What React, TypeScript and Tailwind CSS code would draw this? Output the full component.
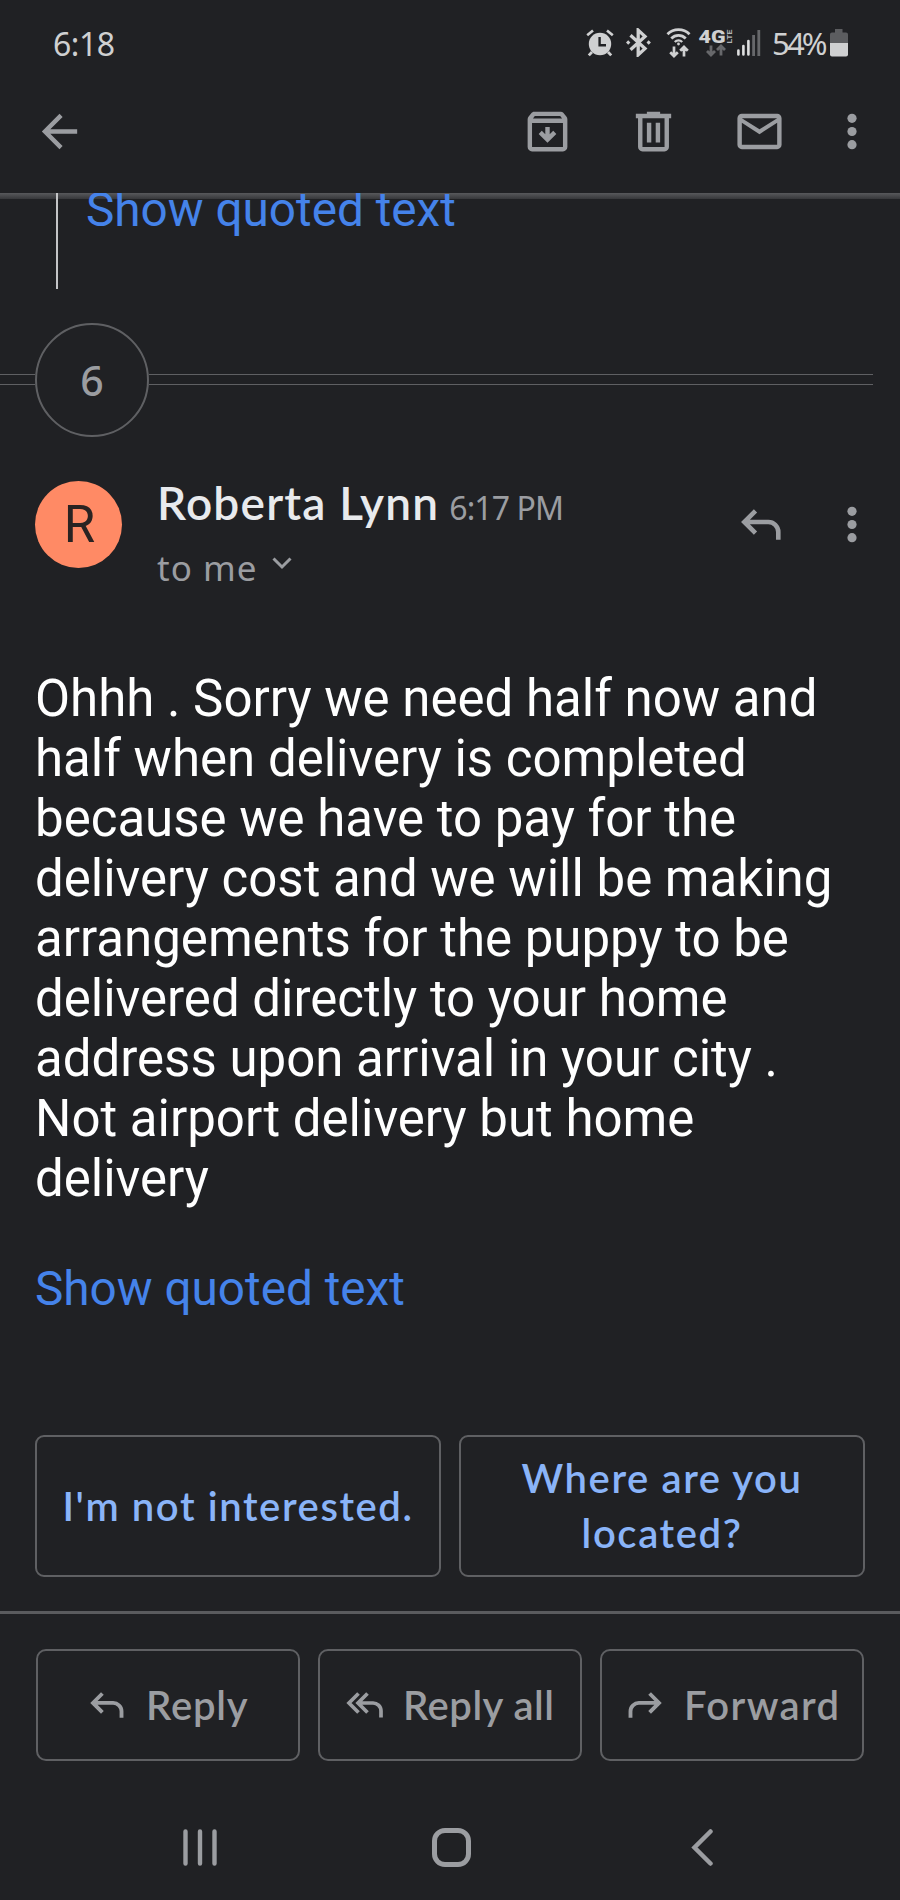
import type { ReactNode } from "react";

const message =
  "Ohhh . Sorry we need half now and half when delivery is completed because we have to pay for the delivery cost and we will be making arrangements for the puppy to be delivered directly to your home address upon arrival in your city . Not airport delivery but home delivery";

function AlarmIcon() {
  return (
    <svg width="28" height="28" viewBox="0 0 28 28" className="text-[#cfd0d1]">
      <circle cx="14" cy="15" r="11.2" fill="currentColor" />
      <path d="M1.2 6.2L7 1.4M26.8 6.2L21 1.4" stroke="currentColor" strokeWidth="2.6" />
      <path d="M6 23L2.8 26.4M22 23l3.2 3.4" stroke="currentColor" strokeWidth="2.8" />
      <path d="M13.6 8v8.2H20" fill="none" stroke="#202124" strokeWidth="2.4" />
    </svg>
  );
}

function BluetoothIcon() {
  return (
    <svg width="25" height="29" viewBox="0 0 25 29" className="text-[#cfd0d1]">
      <path d="M4.5 7.2L19 20.6l-6.8 6.2V2.2L19 8.4 4.5 21.8" fill="none" stroke="currentColor" strokeWidth="3.3" />
      <path d="M0 14.5l2.2-2.2 2.2 2.2-2.200 2.200zM20.500 14.500l2.200-2.200 2.200 2.200-2.200 2.200z" fill="currentColor" />
    </svg>
  );
}

function WifiIcon() {
  return (
    <svg width="25" height="31" viewBox="0 0 25 31" fill="none" stroke="currentColor" className="text-[#cfd0d1]">
      <path d="M1.5 7.2a15.4 15.4 0 0 1 22 0" strokeWidth="2.8" />
      <path d="M5.3 11.4a10.2 10.2 0 0 1 14.4 0" strokeWidth="2.8" />
      <path d="M8.8 15a5.3 5.3 0 0 1 7.4 0" strokeWidth="2.4" />
      <circle cx="12.5" cy="17" r="1.4" fill="currentColor" stroke="none" />
      <path d="M8 19.5v9.5M4.2 25.2L8 29l3.8-3.8M18 29.5V20M14.2 23.8L18 20l3.8 3.8" strokeWidth="2.7" />
    </svg>
  );
}

function LteIcon() {
  return (
    <svg width="35" height="29" viewBox="0 0 35 29" className="overflow-visible">
      <text x="-0.500" y="14.500" textLength="27" lengthAdjust="spacingAndGlyphs" className="fill-[#cfd0d1] font-['Roboto'] text-[18px] font-black">
        4G
      </text>
      <text transform="translate(32.500 15.500) rotate(-90)" textLength="14" lengthAdjust="spacingAndGlyphs" className="fill-[#b4b5b7] font-['Roboto'] text-[7.500px] font-bold">
        LTE
      </text>
      <path
        d="M12 17.5v9M8 23l4 4 4-4M22 27.5v-9M18 22l4-4 4 4"
        fill="none"
        stroke="#67686b"
        strokeWidth="2.8"
      />
    </svg>
  );
}

function SignalIcon() {
  return (
    <svg width="24" height="26" viewBox="0 0 24 26">
      <path d="M1.4 20.5v4M6.4 16v8.500M11.4 11v13.500" stroke="#dedfe0" strokeWidth="2.6" strokeLinecap="round" />
      <path d="M16.6 5v21M21.8 0v26" stroke="#67686b" strokeWidth="2.8" />
    </svg>
  );
}

function BatteryIcon() {
  return (
    <svg width="18" height="28" viewBox="0 0 18 28">
      <path d="M5 0h7.5v3.5H16a2 2 0 0 1 2 2V14H0V5.5a2 2 0 0 1 2-2h3z" fill="#5c5d60" />
      <path d="M0 14h18v11.5a2 2 0 0 1-2 2H2a2 2 0 0 1-2-2z" fill="#cfd0d1" />
    </svg>
  );
}

function ToolIcon({ children, className = "" }: { children: ReactNode; className?: string }) {
  return (
    <svg width="53" height="53" viewBox="0 0 24 24" fill="currentColor" fillRule="evenodd" className={className}>
      {children}
    </svg>
  );
}

function MoreIcon() {
  return (
    <svg width="10" height="37" viewBox="0 0 10 37" fill="currentColor">
      <circle cx="5" cy="5.3" r="4.6" />
      <circle cx="5" cy="18.5" r="4.6" />
      <circle cx="5" cy="31.7" r="4.6" />
    </svg>
  );
}

function ReplyIcon({ className }: { className: string }) {
  return (
    <svg viewBox="0 0 40 31" fill="none" stroke="currentColor" strokeWidth="4.6" className={className}>
      <path d="M14.5 1.8L3.3 13l11.2 11.2M3.3 13H27a10 10 0 0 1 10.3 10v7.8" />
    </svg>
  );
}

function ReplyAllIcon() {
  return (
    <svg width="37" height="26" viewBox="0 0 37 26" fill="none" stroke="currentColor" strokeWidth="3.7">
      <path d="M12.5 1.5L3 11l9.5 9.5M21.5 1.5L12 11l9.5 9.5M12 11h14.5a8 8 0 0 1 8.5 8v6.5" />
    </svg>
  );
}

function ActionButton({ icon, children }: { icon: ReactNode; children: ReactNode }) {
  return (
    <button className="flex h-[112px] items-center rounded-[10px] border-2 border-[#5f6063] pb-[1px] font-['Lato',sans-serif] text-[40px] font-semibold leading-[56px] text-[#9b9da1]">
      {icon}
      {children}
    </button>
  );
}

export default function App() {
  return (
    <div className="flex h-[1900px] w-[900px] flex-col overflow-hidden bg-[#202124] font-['Roboto',sans-serif] text-[#9b9da1]">
      {/* Status bar */}
      <div className="flex h-[88px] shrink-0 items-center justify-between pl-[53px] pr-[52px] font-['Noto_Sans',sans-serif] text-[#cfd0d1]">
        <span className="text-[32px] tracking-[-0.5px]">6:18</span>
        <div className="flex items-center pb-[3px]">
          <AlarmIcon />
          <div className="ml-[12px]"><BluetoothIcon /></div>
          <div className="ml-[15px]"><WifiIcon /></div>
          <div className="ml-[8px]"><LteIcon /></div>
          <div className="ml-[3px]"><SignalIcon /></div>
          <span className="ml-[11px] mt-[2px] w-[58px] whitespace-nowrap text-[31px] tracking-[-2.8px]">54%</span>
          <BatteryIcon />
        </div>
      </div>

      {/* Toolbar */}
      <div className="flex h-[105px] shrink-0 items-center pb-[18px] pl-[33px] pr-[43px]">
        <ToolIcon>
          <path d="M20 11H7.83l5.59-5.59L12 4l-8 8 8 8 1.41-1.41L7.83 13H20z" />
        </ToolIcon>
        <ToolIcon className="ml-auto">
          <path d="M20.54 5.23l-1.39-1.68A1.5 1.5 0 0 0 18 3H6c-.47 0-.88.21-1.16.55L3.46 5.23C3.17 5.57 3 6.02 3 6.5V19c0 1.1.9 2 2 2h14c1.1 0 2-.9 2-2V6.5c0-.48-.17-.93-.46-1.27zM6.24 5h11.52l.83 1.1H5.42zM5 19V8.1h14V19z" />
          <path d="M12 17.1l4-4-1.4-1.4-1.600 1.600V10h-2v3.3l-1.6-1.6-1.4 1.4z" />
        </ToolIcon>
        <ToolIcon className="ml-[53px]">
          <path d="M15 4V3H9v1H4v2h1v13c0 1.1.9 2 2 2h10c1.1 0 2-.9 2-2V6h1V4zm2 15H7V6h10zM9 8h2v9H9zm4 0h2v9h-2z" />
        </ToolIcon>
        <ToolIcon className="ml-[53px] mr-[61px]">
          <path d="M22 6c0-1.1-.9-2-2-2H4c-1.1 0-2 .9-2 2v12c0 1.1.9 2 2 2h16c1.1 0 2-.9 2-2zm-2 0l-8 5-8-5zm0 12H4V8l8 5.2L20 8z" />
        </ToolIcon>
        <MoreIcon />
      </div>

      {/* Tail of the previous message, scrolled under the toolbar */}
      <div className="h-[96px] shrink-0 overflow-hidden bg-[linear-gradient(#58595c,#37383b)] bg-[length:100%_6px] bg-no-repeat pl-[56px]">
        <div className="h-full border-l-2 border-[#c4c5c7] pl-[28px]">
          <p className="-mt-[13px] inline-block text-[47.7px] leading-[60px] text-[#4583ea]">Show quoted text</p>
        </div>
      </div>

      {/* Collapsed thread count */}
      <div className="mt-[33px] flex h-[115px] shrink-0 items-center pr-[27px]">
        <div className="h-[11px] w-[35px] border-y border-[#5f6063]" />
        <div className="flex size-[114px] items-center justify-center rounded-full border-2 border-[#5f6063] pt-[3px] font-['Noto_Sans',sans-serif] text-[41px] font-medium">
          6
        </div>
        <div className="h-[11px] flex-1 border-y border-[#5f6063]" />
      </div>

      {/* Sender */}
      <div className="mt-[35px] flex h-[197px] shrink-0 pl-[35px] pr-[43px]">
        <div className="mt-[9px] flex size-[87px] items-center justify-center rounded-full bg-[#ff8a65] pl-[2px] pt-[2px] text-[51px] text-[#2a2322]">
          R
        </div>
        <div className="ml-[35px] flex-1 whitespace-nowrap pt-[1px]">
          <div className="flex items-baseline">
            <span className="font-['Lato',sans-serif] text-[46px] font-semibold leading-[60px] tracking-[1.2px] text-[#e8eaed]">
              Roberta Lynn
            </span>
            <span className="ml-[10px] font-['Noto_Sans',sans-serif] text-[32px] leading-[50px] tracking-[-0.9px]">6:17 PM</span>
          </div>
          <div className="mt-[10px] flex items-center font-['Noto_Sans',sans-serif] text-[35px] leading-[50px] tracking-[1px]">
            to me
            <svg width="20" height="13" viewBox="0 0 20 13" fill="none" stroke="currentColor" strokeWidth="3" className="mb-[9px] ml-[15px]">
              <path d="M1.5 1.5L10 10l8.5-8.5" />
            </svg>
          </div>
        </div>
        <ReplyIcon className="mr-[66px] mt-[37px] h-[31px] w-[40px]" />
        <div className="mt-[34px]"><MoreIcon /></div>
      </div>

      {/* Message body */}
      <p className="w-[840px] shrink-0 pl-[35px] text-[51px] leading-[60px] text-white">{message}</p>
      <p className="mt-[50px] shrink-0 pl-[35px] text-[47.7px] leading-[60px] text-[#4583ea]">Show quoted text</p>

      {/* Smart replies */}
      <div className="mt-[116px] grid h-[142px] shrink-0 grid-cols-2 gap-[18px] pl-[35px] pr-[35px] font-['Lato',sans-serif] text-[40px] font-semibold leading-[55px] tracking-[1.6px] text-[#8ab4f8]">
        <button className="whitespace-nowrap rounded-[9px] border-2 border-[#5f6063]">I'm not interested.</button>
        <button className="rounded-[9px] border-2 border-[#5f6063] px-10">Where are you located?</button>
      </div>

      {/* Reply actions */}
      <div className="mt-[34px] grid shrink-0 grid-cols-3 gap-[18px] border-t-[3px] border-[#5a5b5e] px-[36px] pt-[35px]">
        <ActionButton icon={<ReplyIcon className="ml-[52px] mr-[22px] h-[26px] w-[34px]" />}>
          <span className="tracking-[0.8px]">Reply</span>
        </ActionButton>
        <ActionButton icon={<div className="ml-[26px] mr-[20px]"><ReplyAllIcon /></div>}>
          <span className="tracking-[0.5px]">Reply all</span>
        </ActionButton>
        <ActionButton icon={<ReplyIcon className="ml-[26px] mr-[22px] h-[26px] w-[34px] -scale-x-100" />}>
          <span className="tracking-[1.4px]">Forward</span>
        </ActionButton>
      </div>

      {/* Navigation bar */}
      <div className="mt-[66px] flex h-[40px] shrink-0 items-center pl-[182px]">
        <svg width="36" height="37" viewBox="0 0 36 37" stroke="currentColor" strokeWidth="4.4" strokeLinecap="round">
          <path d="M3.5 2.5v32M18 2.5v32M32.5 2.5v32" />
        </svg>
        <div className="ml-[214px] h-[39px] w-[39px] rounded-[13px] border-[5px] border-current" />
        <svg width="23" height="37" viewBox="0 0 23 37" fill="none" stroke="currentColor" strokeWidth="4.5" strokeLinecap="round" className="ml-[220px]">
          <path d="M19.5 2.5L3.5 18.5l16 16" />
        </svg>
      </div>
    </div>
  );
}
